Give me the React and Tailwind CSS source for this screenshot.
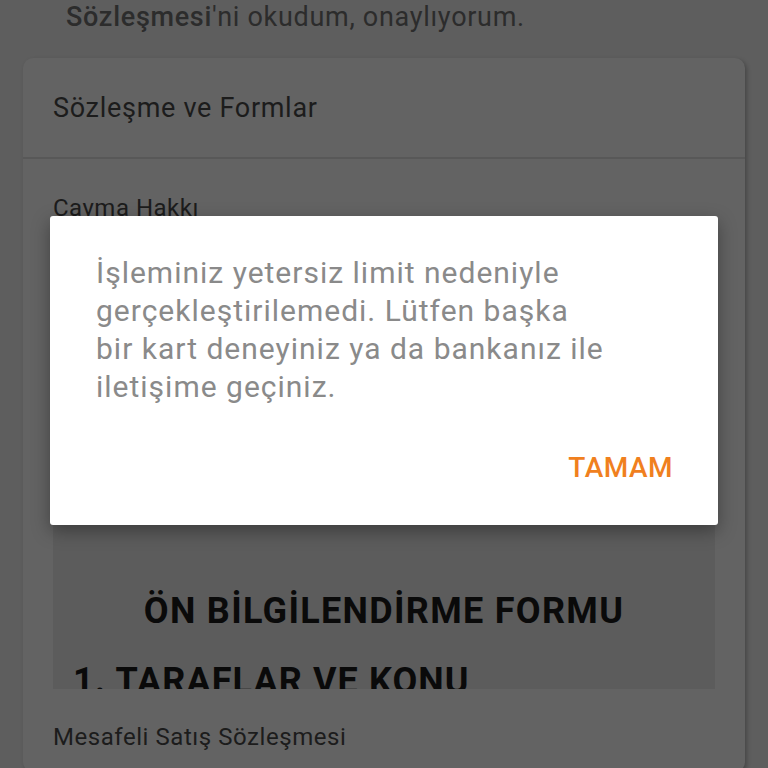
export default function App() {
  return (
    <div
      className="relative h-[768px] w-[768px] overflow-hidden bg-[#5e5e5e]"
      style={{ fontFamily: "Roboto, 'Noto Sans', sans-serif" }}
    >
      <p className="pl-[66px] pt-[1px] text-[27px] leading-8 tracking-[0.7px] text-[#2c2c2c]">
        <span className="font-medium">Sözleşmesi</span>'ni okudum, onaylıyorum.
      </p>

      <div className="mx-[23px] mt-[25px] rounded-[10px] bg-[#636363] shadow-[2px_2px_4px_rgba(0,0,0,0.25)]">
        <div className="px-[30px] pt-[34px] pb-[33px] text-[27px] leading-8 tracking-[0.7px] text-[#1c1c1c]">
          Sözleşme ve Formlar
        </div>
        <div className="h-[2px] bg-[#585858]" />
        <div className="px-[30px] pt-[34px]">
          <div className="text-[24px] leading-[30px] tracking-[0.5px] text-[#1c1c1c]">Cayma Hakkı</div>
          <div className="mt-[18px] h-[448px] overflow-hidden bg-[#5c5c5c] px-[20px] pt-[350px]">
            <div className="text-center text-[36px] font-bold leading-10 tracking-[1.3px] text-[#0a0a0a]">
              ÖN BİLGİLENDİRME FORMU
            </div>
            <div className="mt-[30px] text-[36px] font-bold leading-10 tracking-[1.1px] text-[#0a0a0a]">
              1. TARAFLAR VE KONU
            </div>
          </div>
          <div className="pt-[33px] pb-[20px] text-[24px] leading-[30px] tracking-[0.55px] text-[#1c1c1c]">
            Mesafeli Satış Sözleşmesi
          </div>
        </div>
      </div>

      <div className="absolute left-[50px] top-[216px] h-[309px] w-[668px] rounded-[3px] bg-white shadow-[0_6px_18px_rgba(0,0,0,0.35)]">
        <div className="pl-[46px] pt-[38px] text-[30px] leading-[38px] tracking-[1px] text-[#8a8a8a]">
          <div>İşleminiz yetersiz limit nedeniyle</div>
          <div>gerçekleştirilemedi. Lütfen başka</div>
          <div>bir kart deneyiniz ya da bankanız ile</div>
          <div>iletişime geçiniz.</div>
        </div>
        <div className="flex justify-end pr-[45px] pt-[46px]">
          <span className="text-[28px] font-medium leading-8 tracking-[0.5px] text-[#f0801e]">TAMAM</span>
        </div>
      </div>
    </div>
  );
}
